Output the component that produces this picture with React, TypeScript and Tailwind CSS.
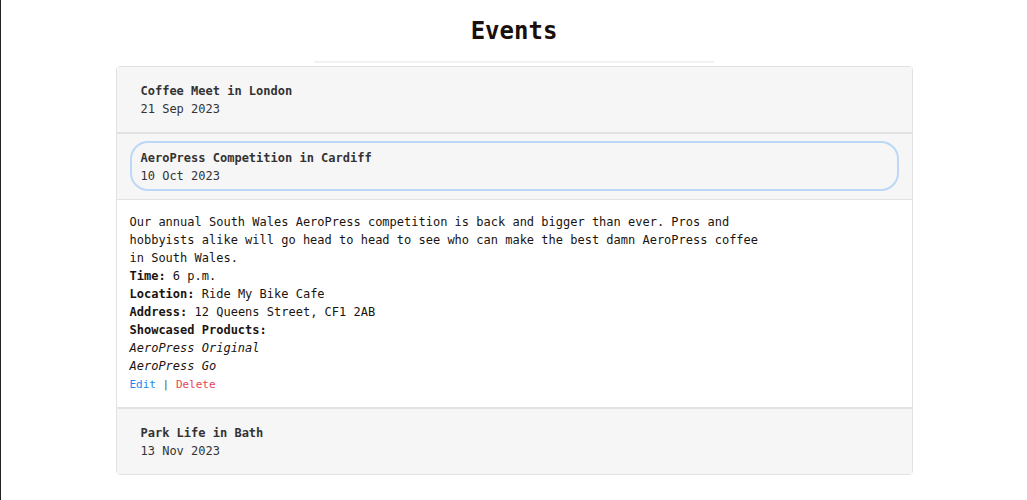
import React, { useState } from "react";

type EventItem = {
  id: number;
  title: string;
  date: string;
  description?: string;
  time?: string;
  location?: string;
  address?: string;
  products?: string[];
};

const events: EventItem[] = [
  { id: 1, title: "Coffee Meet in London", date: "21 Sep 2023" },
  {
    id: 2,
    title: "AeroPress Competition in Cardiff",
    date: "10 Oct 2023",
    description:
      "Our annual South Wales AeroPress competition is back and bigger than ever. Pros and hobbyists alike will go head to head to see who can make the best damn AeroPress coffee in South Wales.",
    time: "6 p.m.",
    location: "Ride My Bike Cafe",
    address: "12 Queens Street, CF1 2AB",
    products: ["AeroPress Original", "AeroPress Go"],
  },
  { id: 3, title: "Park Life in Bath", date: "13 Nov 2023" },
];

export default function App() {
  const [openId, setOpenId] = useState<number | null>(2);

  return (
    <div
      className="min-h-[500px] w-full bg-white border-l border-[#222] text-[#1a1410]"
      style={{ fontFamily: '"DejaVu Sans Mono", "Liberation Mono", monospace' }}
    >
      <div className="flex flex-col items-center pt-[16px]">
        <h1 className="text-[24px] leading-[30px] font-bold text-[#1a0f0a]">Events</h1>
        <div className="mt-[15px] h-[2px] w-[400px] bg-[#f2f2f2]" />
      </div>

      {/* Accordion */}
      <div className="mx-auto mt-[3px] w-[797px]">
        {events.map((ev, i) => {
          const open = openId === ev.id;
          return (
            <div
              key={ev.id}
              className={`border border-[#e2e2e2] ${i === 0 ? "rounded-t" : ""} ${
                i === events.length - 1 ? "rounded-b" : ""
              }`}
            >
              <div className="bg-[#f6f6f6] px-[13px] pt-[7px] pb-[8px]">
                <button
                  onClick={() => setOpenId(open ? null : ev.id)}
                  className={`w-full text-left px-[9px] pt-[6px] pb-[4px] rounded-[18px] border-2 ${
                    open ? "border-[#bcd8f6]" : "border-transparent"
                  }`}
                >
                  <div className="text-[12px] leading-[18px] font-bold text-[#333]">{ev.title}</div>
                  <div className="text-[12px] leading-[18px] text-[#333]">{ev.date}</div>
                </button>
              </div>
              {open && (
                <div className="bg-white border-t border-[#e2e2e2] px-[13px] pt-[13px] pb-[13px] text-[12px] leading-[18px] text-[#1a1410]">
                  <p className="max-w-[640px]">{ev.description}</p>
                  <div>
                    <span className="font-bold">Time:</span> {ev.time}
                  </div>
                  <div>
                    <span className="font-bold">Location:</span> {ev.location}
                  </div>
                  <div>
                    <span className="font-bold">Address:</span> {ev.address}
                  </div>
                  <div className="font-bold">Showcased Products:</div>
                  {ev.products?.map((p) => (
                    <div key={p} className="italic">
                      {p}
                    </div>
                  ))}
                  <div className="mt-[1px] text-[11px] leading-[18px]">
                    <a className="text-[#1e88f0]">Edit</a>
                    <span className="text-[#555]"> | </span>
                    <a className="text-[#e8445a]">Delete</a>
                  </div>
                </div>
              )}
            </div>
          );
        })}
      </div>
    </div>
  );
}
